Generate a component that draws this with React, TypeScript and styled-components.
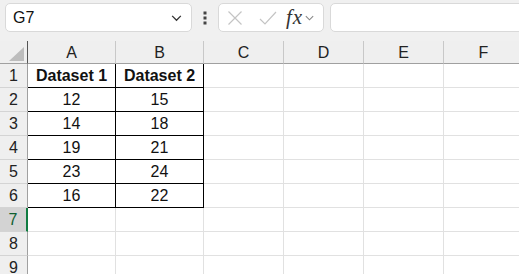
import * as React from 'react';
import styled, { createGlobalStyle, css } from 'styled-components';

const GlobalStyle = createGlobalStyle`
	html, body {
		margin: 0;
		padding: 0;
		background: #f0f0f0;
		overflow: hidden;
	}
	body {
		font-family: "Liberation Sans", Arial, sans-serif;
	}
`;

const Page = styled.div`
	width: 519px;
	height: 274px;
	overflow: hidden;
	background: #f0f0f0;
`;

const FormulaBar = styled.div`
	display: flex;
	align-items: center;
	height: 41px;
	padding: 3px 0 9px 5px;
	box-sizing: border-box;
`;

const NameBox = styled.div`
	display: flex;
	align-items: center;
	justify-content: space-between;
	width: 187px;
	height: 29px;
	box-sizing: border-box;
	background: #fff;
	border: 1px solid #d9d9d9;
	border-radius: 5px;
	padding: 0 8px 0 7px;
	font-size: 16px;
	color: #111;
`;

const Dots = styled.div`
	width: 26px;
	display: flex;
	justify-content: center;
`;

const ButtonGroup = styled.div`
	display: flex;
	align-items: center;
	width: 106px;
	height: 29px;
	box-sizing: border-box;
	background: #fff;
	border: 1px solid #d9d9d9;
	border-radius: 5px;
	padding: 0 4px 0 8px;
`;

const Fx = styled.span`
	font-family: "Liberation Serif", "Times New Roman", serif;
	font-style: italic;
	font-size: 21px;
	color: #333;
	margin-left: 9px;
	letter-spacing: 1px;
	line-height: 1;
`;

const FormulaInput = styled.div`
	flex: 1;
	height: 29px;
	margin-left: 6px;
	margin-right: -10px;
	box-sizing: border-box;
	background: #fff;
	border: 1px solid #d9d9d9;
	border-radius: 5px;
`;

const Grid = styled.div`
	display: grid;
	grid-template-columns: 28px 88px 88px 80px 80px 80px 80px;
	grid-template-rows: 23px repeat(9, 24px);
	background: #fff;
`;

const Corner = styled.div`
	background: #efefef;
	border-right: 1px solid #555;
	border-bottom: 1px solid #a0a0a0;
	box-sizing: border-box;
	position: relative;
`;

const CornerTriangle = styled.div`
	position: absolute;
	right: 3px;
	bottom: 2px;
	width: 0;
	height: 0;
	border-left: 15px solid transparent;
	border-bottom: 14px solid #bdbdbd;
`;

const ColHeader = styled.div`
	display: flex;
	align-items: center;
	justify-content: center;
	background: #efefef;
	border-right: 1px solid #c8c8c8;
	border-bottom: 1px solid #a0a0a0;
	box-sizing: border-box;
	font-size: 16px;
	color: #222;
	padding-top: 1px;
`;

const RowHeader = styled.div<{ $active?: boolean }>`
	display: flex;
	align-items: center;
	justify-content: center;
	background: #efefef;
	border-right: 1px solid #a0a0a0;
	border-bottom: 1px solid #d4d4d4;
	box-sizing: border-box;
	font-size: 16px;
	color: #222;
	padding-top: 1px;
	${p => p.$active && css`
		background: #d3d3d3;
		color: #0f5f30;
		border-right: 2px solid #107c41;
	`}
`;

const Cell = styled.div<{ $boxed?: boolean; $bold?: boolean }>`
	display: flex;
	align-items: center;
	justify-content: center;
	border-right: 1px solid #e1e1e1;
	border-bottom: 1px solid #e1e1e1;
	box-sizing: border-box;
	font-size: 16px;
	color: #111;
	padding-top: 1px;
	${p => p.$boxed && css`
		border-right-color: #000;
		border-bottom-color: #000;
	`}
	${p => p.$bold && css`
		font-weight: bold;
	`}
`;

const columns = ['A', 'B', 'C', 'D', 'E', 'F'];

const data: [string, string][] = [
	['Dataset 1', 'Dataset 2'],
	['12', '15'],
	['14', '18'],
	['19', '21'],
	['23', '24'],
	['16', '22'],
];

const Chevron = ({ size = 12, color = '#444' }: { size?: number; color?: string }) => (
	<svg width={size} height={size} viewBox="0 0 12 12">
		<path d="M2 4.5 L6 8.5 L10 4.5" fill="none" stroke={color} strokeWidth="1.2" />
	</svg>
);

const App = () => {
	const rows = [];
	for (let r = 1; r <= 9; r++) {
		const d = data[r - 1];
		rows.push(
			<RowHeader key={'h' + r} $active={r === 7}>{r}</RowHeader>
		);
		columns.forEach((c, i) => {
			const boxed = !!d && i < 2;
			rows.push(
				<Cell key={c + r} $boxed={boxed} $bold={r === 1 && boxed}>
					{boxed ? d[i] : ''}
				</Cell>
			);
		});
	}

	return (
		<Page>
			<GlobalStyle />
			<FormulaBar>
				<NameBox>
					<span>G7</span>
					<Chevron size={13} color="#333" />
				</NameBox>
				<Dots>
					<svg width="4" height="14" viewBox="0 0 4 14">
						<rect x="0.5" y="0.5" width="3" height="3" fill="#444" />
						<rect x="0.5" y="5.5" width="3" height="3" fill="#444" />
						<rect x="0.5" y="10.5" width="3" height="3" fill="#444" />
					</svg>
				</Dots>
				<ButtonGroup>
					<svg width="16" height="16" viewBox="0 0 16 16">
						<path d="M1.5 1.5 L14.5 14.5 M14.5 1.5 L1.5 14.5" stroke="#c4c4c4" strokeWidth="1.2" fill="none" />
					</svg>
					<svg width="18" height="16" viewBox="0 0 18 16" style={{ marginLeft: 16 }}>
						<path d="M1 9 L6 14 L17 2" stroke="#c4c4c4" strokeWidth="1.2" fill="none" />
					</svg>
					<Fx>fx</Fx>
					<span style={{ marginLeft: 1, display: 'flex' }}>
						<Chevron size={11} color="#888" />
					</span>
				</ButtonGroup>
				<FormulaInput />
			</FormulaBar>
			<Grid>
				<Corner>
					<CornerTriangle />
				</Corner>
				{columns.map(c => (
					<ColHeader key={c}>{c}</ColHeader>
				))}
				{rows}
			</Grid>
		</Page>
	);
};

export default App;
